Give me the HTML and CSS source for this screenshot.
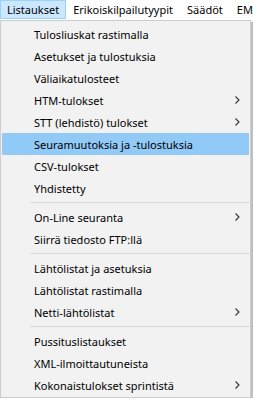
FILE: index.html
```html
<!DOCTYPE html>
<html>

<head>
    <title>Listaukset</title>
    <link rel="stylesheet" href="styles.css">
</head>

<body>
    <div class="menubar">
        <span class="topItem active">Listaukset</span>
        <span class="topItem">Erikoiskilpailutyypit</span>
        <span class="topItem">Säädöt</span>
        <span class="topItem">EMIT</span>
    </div>
    <div class="dropdown">
        <div class="item">Tulosliuskat rastimalla</div>
        <div class="item">Asetukset ja tulostuksia</div>
        <div class="item">Väliaikatulosteet</div>
        <div class="item sub">HTM-tulokset<svg width="5" height="8" viewBox="0 0 5 8"><polyline points="0.5,0.5 4,4 0.5,7.5" /></svg></div>
        <div class="item sub">STT (lehdistö) tulokset<svg width="5" height="8" viewBox="0 0 5 8"><polyline points="0.5,0.5 4,4 0.5,7.5" /></svg></div>
        <div class="item selected">Seuramuutoksia ja -tulostuksia</div>
        <div class="item">CSV-tulokset</div>
        <div class="item">Yhdistetty</div>
        <div class="separator"></div>
        <div class="item sub">On-Line seuranta<svg width="5" height="8" viewBox="0 0 5 8"><polyline points="0.5,0.5 4,4 0.5,7.5" /></svg></div>
        <div class="item">Siirrä tiedosto FTP:llä</div>
        <div class="separator"></div>
        <div class="item">Lähtölistat ja asetuksia</div>
        <div class="item">Lähtölistat rastimalla</div>
        <div class="item sub">Netti-lähtölistat<svg width="5" height="8" viewBox="0 0 5 8"><polyline points="0.5,0.5 4,4 0.5,7.5" /></svg></div>
        <div class="separator"></div>
        <div class="item">Pussituslistaukset</div>
        <div class="item">XML-ilmoittautuneista</div>
        <div class="item sub">Kokonaistulokset sprintistä<svg width="5" height="8" viewBox="0 0 5 8"><polyline points="0.5,0.5 4,4 0.5,7.5" /></svg></div>
    </div>
</body>

</html>
```
FILE: styles.css
```css
* {
    padding: 0;
    margin: 0;
    box-sizing: border-box;
}

body {
    font-family: "Noto Sans", sans-serif;
    font-size: 11px;
    color: #000;
    background: #fff;
    overflow: hidden;
}

.menubar {
    display: flex;
    height: 20px;
    background: #fff;
    white-space: nowrap;
    overflow: hidden;
}

.topItem {
    padding: 0 6px;
    height: 19px;
    line-height: 17px;
    border: 1px solid transparent;
}

.topItem.active {
    background: #cce8ff;
    border-color: #99d1ff;
}

.dropdown {
    width: 251px;
    background: #f2f2f2;
    border: 1px solid #cccccc;
    padding: 2px 0 1px;
    box-shadow: 2px 2px 1px rgba(0, 0, 0, 0.25);
}

.item {
    display: flex;
    align-items: center;
    justify-content: space-between;
    height: 22px;
    margin: 0 1px;
    padding: 0 9px 0 32px;
    white-space: nowrap;
}

.item.selected {
    background: #91c9f7;
}

.item svg {
    fill: none;
    stroke: #333;
    stroke-width: 1.1;
}

.separator {
    height: 7px;
    margin: 0 1px 0 29px;
    padding-top: 3px;
}

.separator::before {
    content: "";
    display: block;
    height: 1px;
    background: #d7d7d7;
}
```
